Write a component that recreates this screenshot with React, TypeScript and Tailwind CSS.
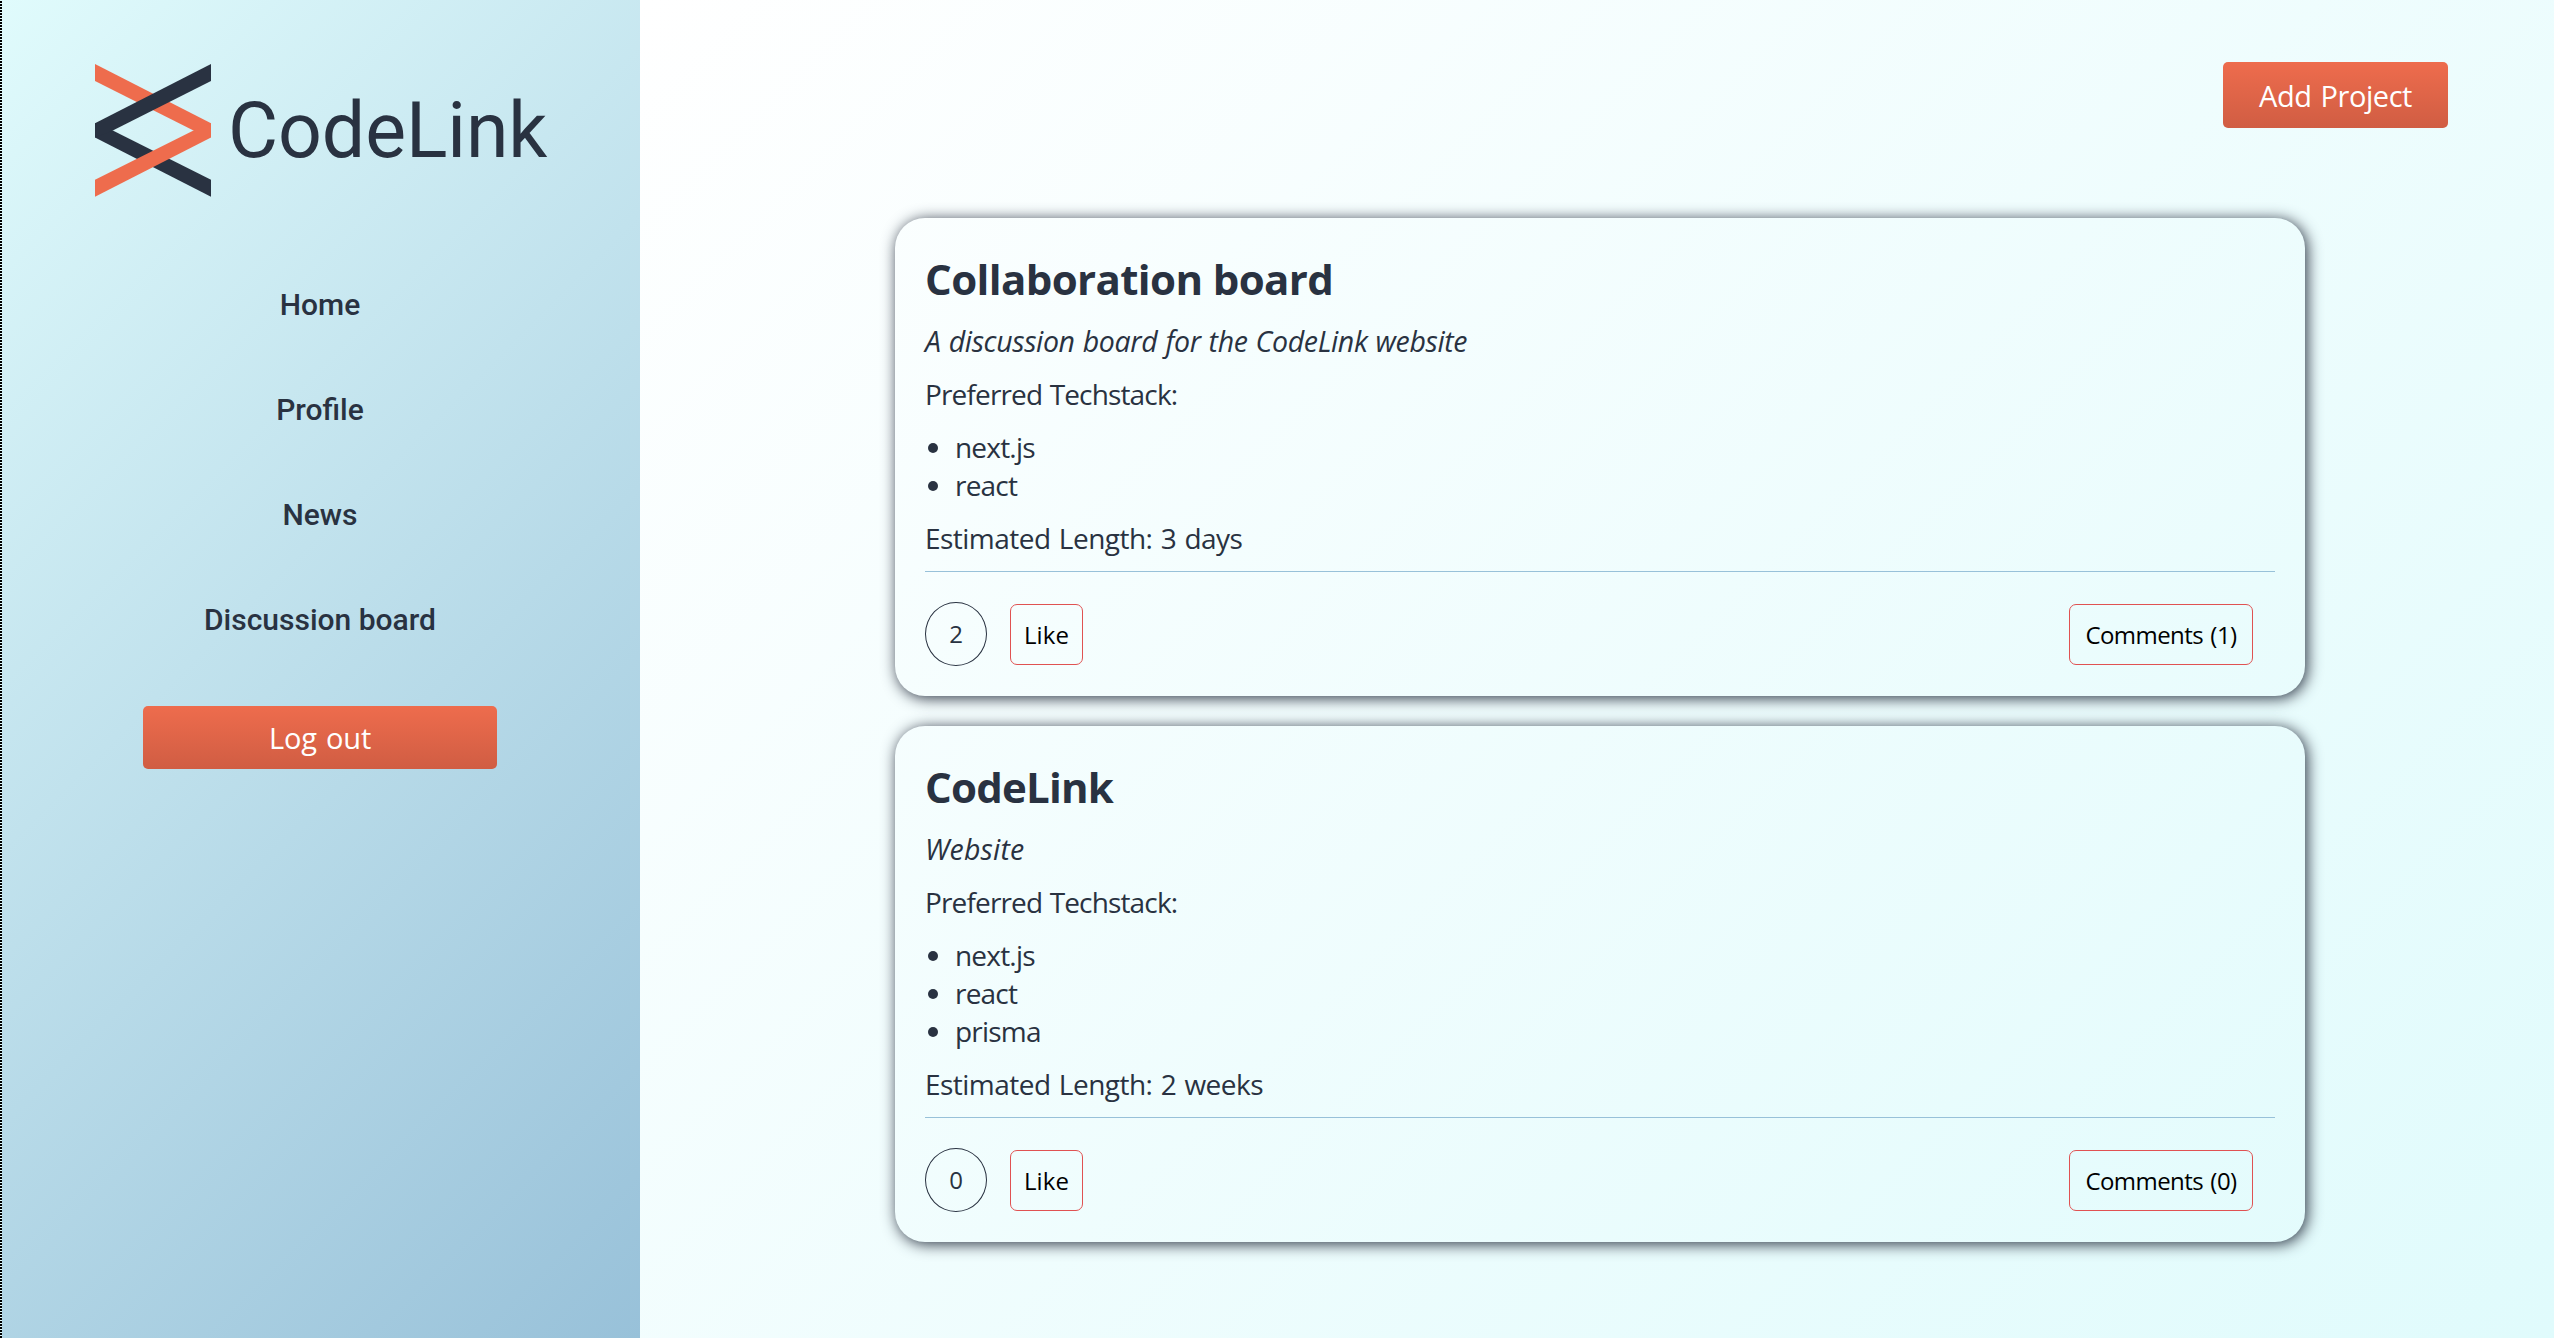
type Project = {
  title: string;
  titleTracking: string;
  summary: string;
  summaryTracking: string;
  stack: string[];
  length: string;
  likes: number;
  comments: number;
};

const projects: Project[] = [
  {
    title: "Collaboration board",
    titleTracking: "tracking-[-0.62px]",
    summary: "A discussion board for the CodeLink website",
    summaryTracking: "tracking-[-0.35px] [word-spacing:1px]",
    stack: ["next.js", "react"],
    length: "3 days",
    likes: 2,
    comments: 1,
  },
  {
    title: "CodeLink",
    titleTracking: "tracking-[-0.8px]",
    summary: "Website",
    summaryTracking: "tracking-[0.2px]",
    stack: ["next.js", "react", "prisma"],
    length: "2 weeks",
    likes: 0,
    comments: 0,
  },
];

const links = ["Home", "Profile", "News", "Discussion board"];

function Logo() {
  return (
    <div className="ml-[95px] flex h-[196px] pt-16">
      <svg width="116" height="133" viewBox="0 0 116 133" className="shrink-0">
        <path d="M0 0 L116 59.3 V73.2 L98.5 66.5 L0 17Z" fill="#ee6c4d" />
        <path d="M0 59.3 L17.8 66.5 L116 115.7 V132.7 L0 73.4Z" fill="#293241" />
        <path d="M116 0 V17 L17.8 66.5 L0 73.4 V59.3Z" fill="#293241" />
        <path d="M116 59.3 V73.4 L0 132.7 V115.7 L98.5 66.5Z" fill="#ee6c4d" />
      </svg>
      <span className="ml-[17px] mt-[22px] font-['Roboto',sans-serif] text-[77px] leading-[90px] tracking-[-0.1px]">
        CodeLink
      </span>
    </div>
  );
}

function Sidebar() {
  return (
    <aside className="flex w-[640px] shrink-0 bg-[linear-gradient(135deg,#e0fbfc,#98c1d9)]">
      <div className="w-[2px] shrink-0 bg-[repeating-linear-gradient(to_bottom,#e0fbfc_0px,#e0fbfc_1px,#000_1px,#000_3px)]" />
      <div className="-ml-[2px] flex flex-1 flex-col">
        <Logo />
        <nav className="mt-[91px] flex flex-col items-center gap-[70px] font-['Roboto',sans-serif] text-[30px] font-medium leading-[35px]">
          {links.map((l) => (
            <a key={l}>{l}</a>
          ))}
        </nav>
        <button className="ml-[143px] mt-[69px] h-[63px] w-[354px] rounded-[5px] bg-[linear-gradient(#ee6c4d,#d05d43)] pt-px text-[29px] tracking-[-0.2px] text-white [word-spacing:2px]">
          Log out
        </button>
      </div>
    </aside>
  );
}

function Card({ p }: { p: Project }) {
  return (
    <article className="flex flex-col rounded-[30px] p-[30px] text-[28px] leading-[38px] tracking-[-0.8px] shadow-[2px_2px_15px_#293241]">
      <h2 className={`mb-[13px] text-[42px] font-bold leading-[61px] ${p.titleTracking}`}>{p.title}</h2>
      <p className={`mb-[15px] text-[28.5px] italic ${p.summaryTracking}`}>{p.summary}</p>
      <p className="mb-[15px] tracking-[-0.85px] [word-spacing:1px]">Preferred Techstack:</p>
      <ul className="mb-[15px] list-disc pl-[30px]">
        {p.stack.map((s) => (
          <li key={s}>{s}</li>
        ))}
      </ul>
      <p className="tracking-[-0.52px] [word-spacing:1.5px]">Estimated Length: {p.length}</p>
      <hr className="mb-[30px] mt-[14px] border-t border-[#98c1d9]" />
      <div className="flex h-16 items-center text-[24px]">
        <span className="flex h-16 w-[62px] items-center justify-center rounded-[50%] border border-[#293241] tracking-normal">
          {p.likes}
        </span>
        <button className="ml-[23px] mt-px h-[61px] w-[73px] rounded-[7px] border border-[#e05252] tracking-[0.1px] text-black">
          Like
        </button>
        <button className="ml-auto mr-[22px] mt-px h-[61px] w-[184px] rounded-[7px] border border-[#e05252] tracking-[-0.55px] text-black [word-spacing:1.5px]">
          Comments ({p.comments})
        </button>
      </div>
    </article>
  );
}

export default function App() {
  return (
    <div className="flex h-[1338px] w-full overflow-hidden font-['Open_Sans','Noto_Sans',sans-serif] text-[#293241]">
      <Sidebar />
      <main className="flex flex-1 flex-col bg-[linear-gradient(135deg,#ffffff,#e0fbfc)]">
        <button className="mr-[106px] mt-[62px] h-[66px] w-[225px] self-end rounded-[5px] bg-[linear-gradient(#ee6c4d,#d05d43)] pt-px text-[29px] tracking-[-0.45px] text-white [word-spacing:2px]">
          Add Project
        </button>
        <section className="ml-[255px] mt-[90px] flex w-[1410px] flex-col gap-[30px]">
          {projects.map((p) => (
            <Card key={p.title} p={p} />
          ))}
        </section>
      </main>
    </div>
  );
}
